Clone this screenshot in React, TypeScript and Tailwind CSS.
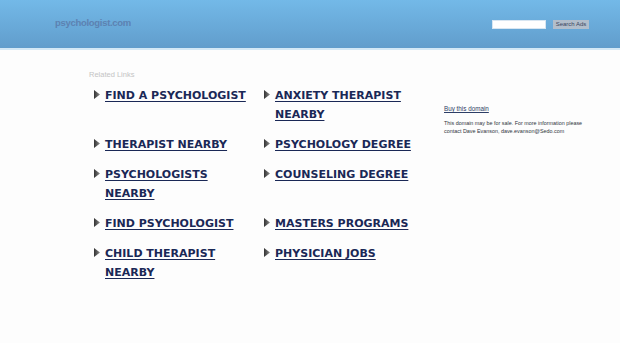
import React from "react";

const links = [
  "FIND A PSYCHOLOGIST",
  "ANXIETY THERAPIST NEARBY",
  "THERAPIST NEARBY",
  "PSYCHOLOGY DEGREE",
  "PSYCHOLOGISTS NEARBY",
  "COUNSELING DEGREE",
  "FIND PSYCHOLOGIST",
  "MASTERS PROGRAMS",
  "CHILD THERAPIST NEARBY",
  "PHYSICIAN JOBS",
];

function Arrow() {
  return (
    <svg width="7" height="9" viewBox="0 0 7 9" className="mt-[4px] shrink-0">
      <defs>
        <linearGradient id="ag" x1="0" x2="1" y1="0" y2="0">
          <stop offset="0" stopColor="#333" />
          <stop offset="1" stopColor="#888" />
        </linearGradient>
      </defs>
      <polygon points="0,0 6,4.5 0,9" fill="url(#ag)" />
    </svg>
  );
}

function Item({ text }: { text: string }) {
  return (
    <div className="flex gap-[4px] pb-[11px]">
      <Arrow />
      <a
        href="#"
        className="block max-w-[150px] text-[11px] leading-[19px] font-bold text-[#1a2856] underline decoration-[#1a2856] underline-offset-[2px]"
        style={{ fontFamily: '"DejaVu Sans", Verdana, sans-serif' }}
      >
        {text}
      </a>
    </div>
  );
}

export default function App() {
  return (
    <div className="w-[620px] h-[343px] bg-[#fdfdfd] overflow-hidden" style={{ fontFamily: '"Liberation Sans", Arial, sans-serif' }}>
      <div className="h-[48px] bg-gradient-to-b from-[#73b9e8] to-[#619dcc] flex items-center pl-[55px] pr-[31px]">
        <div className="text-[9.5px] font-bold text-[#5a78a8] opacity-80 tracking-[-0.3px] mt-[-1px]">psychologist.com</div>
        <div className="ml-auto flex items-center gap-[7px] mt-[1px]">
          <div className="w-[54px] h-[9px] bg-white border border-[#d8e6f2]" />
          <div className="w-[36px] h-[9px] bg-[#b2becb] text-[6px] leading-[9px] text-[#3a4660] text-center">Search Ads</div>
        </div>
      </div>
      <div className="h-[2px] bg-[#d3e8f6]" />
      <div className="flex pl-[89px] pt-[21px]">
        <div className="w-[355px]">
          <div className="text-[7.5px] leading-[8px] text-[#c4c4c4]">Related Links</div>
          <div className="grid grid-cols-[170px_170px] pl-[5px] pt-[7px]">
            {links.map((t) => (
              <Item key={t} text={t} />
            ))}
          </div>
        </div>
        <div className="pt-[34px] w-[142px]">
          <a href="#" className="block text-[6.3px] leading-[8px] text-[#2d3e66] underline">Buy this domain</a>
          <div className="mt-[6px] text-[5.4px] leading-[8px] text-[#2f3440]">
            This domain may be for sale. For more information please contact Dave Evanson, dave.evanson@Sedo.com
          </div>
        </div>
      </div>
    </div>
  );
}
